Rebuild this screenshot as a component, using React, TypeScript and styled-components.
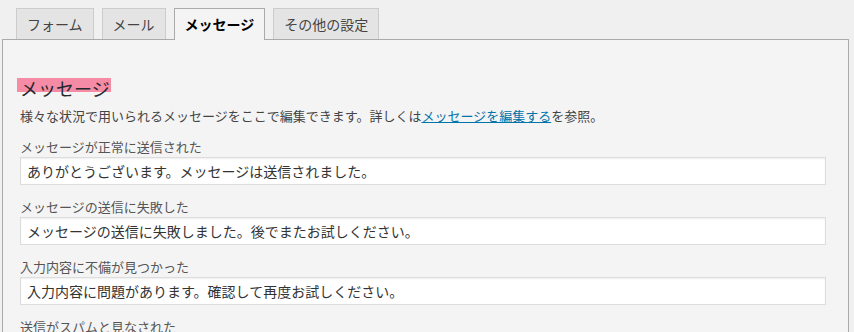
import React from "react";
import styled, { createGlobalStyle } from "styled-components";

const Global = createGlobalStyle`
  html, body {
    margin: 0;
    padding: 0;
    background: #f0f0f0;
    font-family: "Noto Sans CJK JP", "Noto Sans", sans-serif;
  }
  * { box-sizing: border-box; }
`;

const Page = styled.div`
  padding: 0 5px 0 2px;
`;

const TabBar = styled.div`
  display: flex;
  align-items: flex-end;
  gap: 8px;
  padding: 8px 0 0 14px;
`;

const Tab = styled.div<{ $active?: boolean }>`
  height: ${(p) => (p.$active ? "32px" : "31px")};
  margin-bottom: ${(p) => (p.$active ? "-1px" : "0")};
  position: relative;
  z-index: ${(p) => (p.$active ? 1 : 0)};
  padding: 0 10px;
  display: flex;
  align-items: center;
  padding-bottom: ${(p) => (p.$active ? "1px" : "0")};
  border: 1px solid ${(p) => (p.$active ? "#aaa" : "#ccc")};
  border-bottom: none;
  background: ${(p) => (p.$active ? "#f4f4f4" : "#e4e4e4")};
  color: ${(p) => (p.$active ? "#000" : "#444")};
  font-weight: ${(p) => (p.$active ? 700 : 400)};
  font-size: 14px;
  line-height: 20px;
  white-space: nowrap;
`;

const Panel = styled.div`
  border: 1px solid #aaa;
  background: #f4f4f4;
  padding: 38px 22px 40px 17px;
  display: flex;
  flex-direction: column;
  align-items: flex-start;
`;

const Heading = styled.h2`
  margin: 0 0 0 -3px;
  padding: 0 1px 0 3px;
  height: 14px;
  line-height: 20px;
  font-size: 18px;
  font-weight: 400;
  color: #23282d;
  background: #f68ba6;
  white-space: nowrap;
`;

const Description = styled.p`
  margin: 14px 0 0;
  font-size: 13px;
  line-height: 20px;
  color: #444;
`;

const Link = styled.a`
  color: #0073aa;
  text-decoration: underline;
`;

const Field = styled.div`
  margin-top: 11px;
  align-self: stretch;
  display: flex;
  flex-direction: column;
  & + & {
    margin-top: 12px;
  }
`;

const Label = styled.label`
  font-size: 13px;
  line-height: 20px;
  color: #555;
`;

const Input = styled.input`
  height: 28px;
  width: 100%;
  border: 1px solid #ddd;
  box-shadow: inset 0 1px 2px rgba(0, 0, 0, 0.07);
  background: #fff;
  padding: 0 6px;
  font-family: inherit;
  font-size: 14px;
  color: #333;
  outline: none;
  margin: 0;
`;

const tabs = ["フォーム", "メール", "メッセージ", "その他の設定"];

const fields = [
  ["メッセージが正常に送信された", "ありがとうございます。メッセージは送信されました。"],
  ["メッセージの送信に失敗した", "メッセージの送信に失敗しました。後でまたお試しください。"],
  ["入力内容に不備が見つかった", "入力内容に問題があります。確認して再度お試しください。"],
  ["送信がスパムと見なされた", "メッセージの送信に失敗しました。後でまたお試しください。"],
];

export default function App() {
  return (
    <>
      <Global />
      <Page>
        <TabBar>
          {tabs.map((t) => (
            <Tab key={t} $active={t === "メッセージ"}>
              {t}
            </Tab>
          ))}
        </TabBar>
        <Panel>
          <Heading>メッセージ</Heading>
          <Description>
            様々な状況で用いられるメッセージをここで編集できます。詳しくは
            <Link href="#">メッセージを編集する</Link>を参照。
          </Description>
          {fields.map(([label, value]) => (
            <Field key={label}>
              <Label>{label}</Label>
              <Input defaultValue={value} />
            </Field>
          ))}
        </Panel>
      </Page>
    </>
  );
}
